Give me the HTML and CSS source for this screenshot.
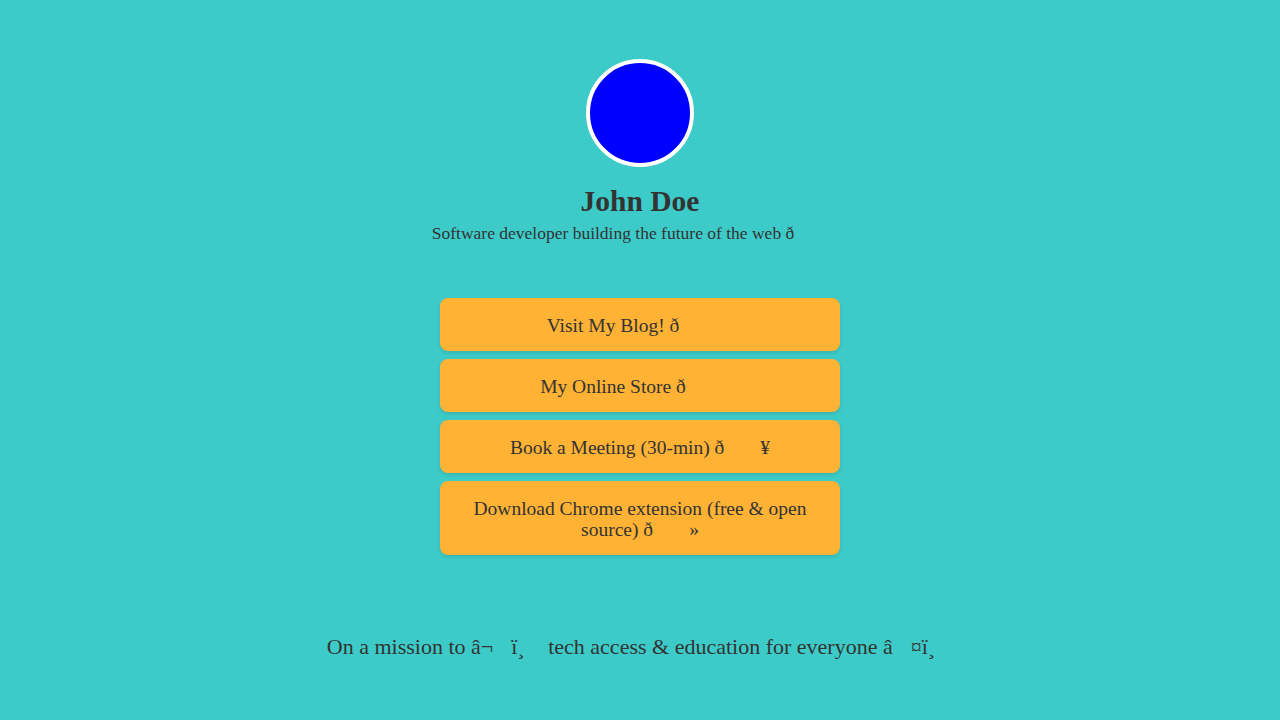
FILE: index.html
```html
<!DOCTYPE html>
<html lang="en">
<head>
<meta charset="utf-8">
<title>John Doe</title>
<link rel="stylesheet" href="styles.css">
</head>
<body>
<main class="page">
  <header class="profile">
    <div class="avatar"></div>
    <h1 class="name">John Doe</h1>
    <p class="bio">Software developer building the future of the web ð<span class="cc"></span><span class="cc"></span><span class="cc"></span></p>
  </header>
  <nav class="links">
    <a class="link" href="#">Visit My Blog! ð<span class="cc"></span><span class="cc"></span><span class="cc"></span></a>
    <a class="link" href="#">My Online Store ð<span class="cc"></span><span class="cc"></span><span class="cc"></span></a>
    <a class="link" href="#">Book a Meeting (30-min) ð<span class="cc"></span><span class="cc"></span>¥</a>
    <a class="link" href="#">Download Chrome extension (free &amp; open source) ð<span class="cc"></span><span class="cc"></span>»</a>
  </nav>
  <footer class="mission">On a mission to â¬<span class="cc"></span>ï¸<span class="cc"></span> tech access &amp; education for everyone â<span class="cc"></span>¤ï¸<span class="cc"></span></footer>
</main>
</body>
</html>
```
FILE: styles.css
```css
html, body {
  margin: 0;
  padding: 0;
}
body {
  background: #3dcbc9;
  color: #333333;
  font-family: "Liberation Serif", "DejaVu Serif", serif;
  min-height: 720px;
}
.page {
  display: flex;
  flex-direction: column;
  align-items: center;
  padding-top: 59px;
}
.profile {
  display: flex;
  flex-direction: column;
  align-items: center;
}
.avatar {
  width: 100px;
  height: 100px;
  border-radius: 50%;
  background: #0000ff;
  border: 4px solid #ffffff;
}
.name {
  margin: 19px 0 0;
  font-size: 29.5px;
  line-height: 30px;
  font-weight: 700;
}
.bio {
  margin: 6px 0 0;
  font-size: 17.5px;
  line-height: 22px;
}
.cc {
  display: inline-block;
  width: 18px;
}
.links {
  display: flex;
  flex-direction: column;
  gap: 8px;
  width: 400px;
  margin-top: 54px;
}
.link {
  display: block;
  background: #ffb233;
  color: #333333;
  text-decoration: none;
  text-align: center;
  font-size: 19.5px;
  line-height: 21px;
  padding: 17px 30px 15px;
  border-radius: 8px;
  box-shadow: 0 2px 4px rgba(0, 0, 0, 0.12);
}
.mission {
  margin-top: 79px;
  font-size: 22px;
  line-height: 26px;
}
```
